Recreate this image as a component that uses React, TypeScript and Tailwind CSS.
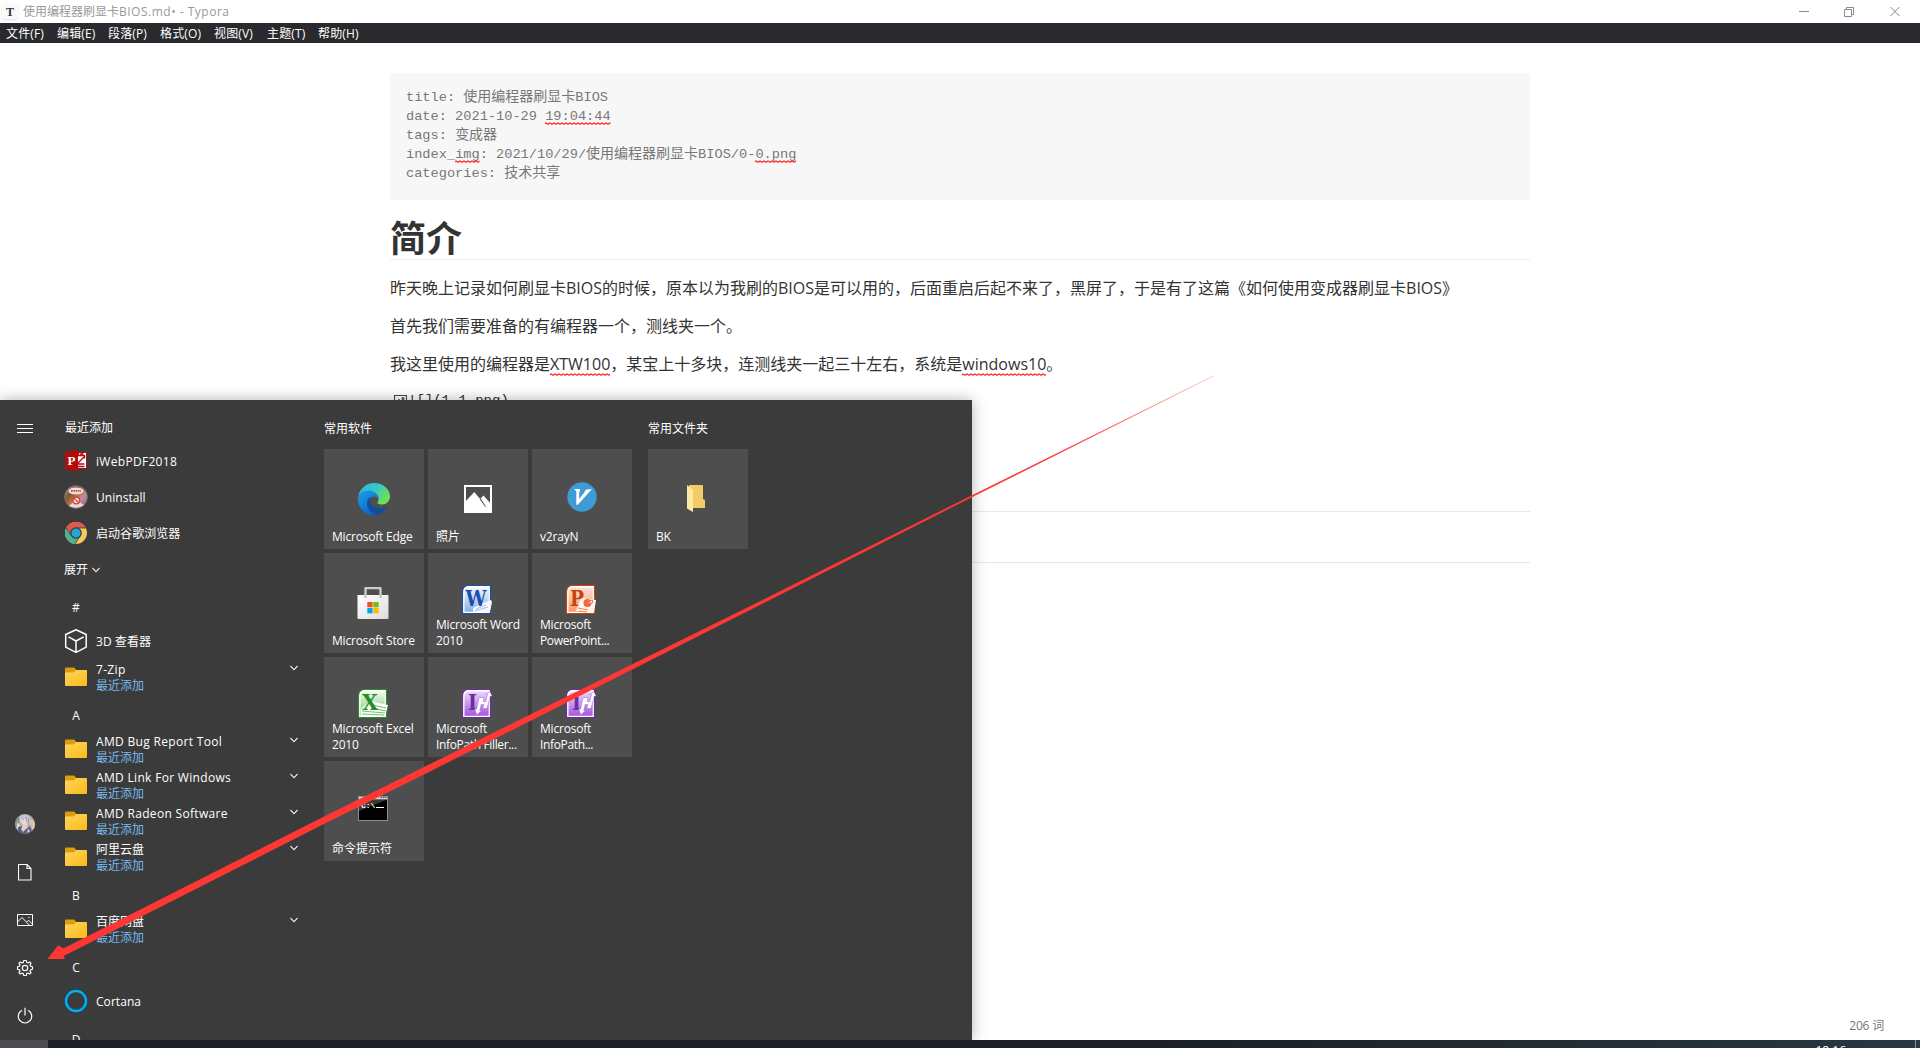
import React from "react";

const UI = "font-['Open_Sans','Noto_Sans_CJK_SC',sans-serif]";

function Squiggle({ children, code = false }: { children: React.ReactNode; code?: boolean }) {
  return (
    <span className="relative inline-block">
      {children}
      <svg className={code ? "absolute left-0 bottom-[1px] h-[3px] w-full" : "absolute left-0 bottom-[1px] h-[3px] w-full"}>
        <defs>
          <pattern id="wave" width="4" height="3" patternUnits="userSpaceOnUse">
            <path d="M0 2.2 L1 0.8 L3 2.4 L4 1.2" fill="none" stroke="#f33" strokeWidth="1.1" />
          </pattern>
        </defs>
        <rect width="100%" height="3" fill="url(#wave)" />
      </svg>
    </span>
  );
}

function Folder() {
  return (
    <svg width="22" height="20" viewBox="0 0 22 20">
      <defs>
        <linearGradient id="fold" x1="0" y1="0" x2="1" y2="1">
          <stop offset="0" stopColor="#ffd75e" />
          <stop offset="1" stopColor="#fbb917" />
        </linearGradient>
      </defs>
      <path d="M0 1.2Q0 .5 .8 .5H9l2.4 2.5V8H0Z" fill="#dd9c0c" />
      <path d="M0 5.5h8.5L11.2 3H21.2q.8 0 .8.8V18.2q0 .8-.8.8H.8q-.8 0-.8-.8Z" fill="url(#fold)" />
    </svg>
  );
}

function PdfIcon() {
  return (
    <svg width="24" height="24" viewBox="0 0 24 24">
      <rect x="11" y="3.5" width="11.5" height="16" fill="#fff" stroke="#b30c0c" />
      <path d="M14.500 3.500v3h2.500v-3M19 4l-1.500 3M14 14l7-7M17.500 6.500h3v3M14 15h6.500M14 17.500h6.500" stroke="#b30c0c" strokeWidth="1.4" fill="none" />
      <path d="M1 2.8 14 .8V22.500L1 20Z" fill="#b30c0c" />
      <text x="3.4" y="15.800" fontSize="13" fontWeight="700" fill="#fff" fontFamily="Liberation Serif">P</text>
    </svg>
  );
}

function UninstallIcon() {
  return (
    <svg width="24" height="24" viewBox="0 0 24 24">
      <defs>
        <linearGradient id="un" x1="0" y1="0" x2="1" y2="1">
          <stop offset="0" stopColor="#c9a0a0" />
          <stop offset=".3" stopColor="#7a5a3c" />
          <stop offset=".45" stopColor="#b5642c" />
          <stop offset=".65" stopColor="#c98aa0" />
          <stop offset="1" stopColor="#8d5a6a" />
        </linearGradient>
      </defs>
      <circle cx="12" cy="12" r="11.3" fill="url(#un)" stroke="#777" />
      <ellipse cx="12" cy="6" rx="7.5" ry="3.6" fill="#f3ddda" />
      <path d="M7 5.8h10" stroke="#b04a4a" strokeWidth="1.8" strokeDasharray="1.6 .7" />
      <path d="M5 21q7-8 15-1-7 5-15 1Z" fill="#e6d6d4" />
      <circle cx="12.3" cy="15.5" r="3.3" fill="#f6e4e2" stroke="#d0403a" strokeWidth="1.2" />
      <path d="m10 13.2 4.7 4.6" stroke="#d0403a" strokeWidth="1.2" />
    </svg>
  );
}

function ChromeIcon() {
  return (
    <svg width="24" height="24" viewBox="0 0 24 24">
      <circle cx="12" cy="12" r="11" fill="#f3c95b" />
      <path d="M12 12 6.5 15 2.3 6.7A11 11 0 0 1 21.8 7H12Z" fill="#e2574c" />
      <path d="M2.3 6.8 7.5 14.5 12 17 15.5 15.5 11 23A11 11 0 0 1 2.3 6.8Z" fill="#4bb395" />
      <path d="M2.3 6.8 7.2 14.6M21.8 7H12M11 23l5.4-8.4" stroke="#3b3b3b" strokeWidth=".8" />
      <circle cx="12" cy="12" r="5.2" fill="#25a6d8" stroke="#373737" strokeWidth="1.2" />
    </svg>
  );
}

function CubeIcon() {
  return (
    <svg width="24" height="24" viewBox="0 0 24 24" fill="none" stroke="#fff" strokeWidth="1.5" strokeLinejoin="round">
      <path d="M12 .8 22.2 5.500V18.2L12 23.3 1.7 18.2V5.500ZM12 23V12M4.5 7.8 12 12l7.7-4.2" />
    </svg>
  );
}

function CortanaIcon() {
  return (
    <svg width="24" height="24" viewBox="0 0 24 24" fill="none">
      <circle cx="12" cy="12" r="10" stroke="#0a5f87" strokeWidth="3.4" />
      <circle cx="12" cy="12" r="10" stroke="#08b3fa" strokeWidth="1.9" />
    </svg>
  );
}

function Chevron() {
  return (
    <svg width="8" height="6" viewBox="0 0 8 6" fill="none" stroke="#e8e8e8" strokeWidth="1.1">
      <path d="M.4 1 4 4.6 7.6 1" />
    </svg>
  );
}

type Row = { kind: "head" | "letter" | "app" | "folder" | "expand"; text: string; icon?: React.ReactNode };

const rows: Row[] = [
  { kind: "head", text: "最近添加" },
  { kind: "app", text: "iWebPDF2018", icon: <PdfIcon /> },
  { kind: "app", text: "Uninstall", icon: <UninstallIcon /> },
  { kind: "app", text: "启动谷歌浏览器", icon: <ChromeIcon /> },
  { kind: "expand", text: "展开" },
  { kind: "letter", text: "#" },
  { kind: "app", text: "3D 查看器", icon: <CubeIcon /> },
  { kind: "folder", text: "7-Zip" },
  { kind: "letter", text: "A" },
  { kind: "folder", text: "AMD Bug Report Tool" },
  { kind: "folder", text: "AMD Link For Windows" },
  { kind: "folder", text: "AMD Radeon Software" },
  { kind: "folder", text: "阿里云盘" },
  { kind: "letter", text: "B" },
  { kind: "folder", text: "百度网盘" },
  { kind: "letter", text: "C" },
  { kind: "app", text: "Cortana", icon: <CortanaIcon /> },
  { kind: "letter", text: "D" },
];

const cjkOnly = (s: string) => /^[\u4e00-\u9fff]+$/.test(s);

function AppRow({ row }: { row: Row }) {
  if (row.kind === "head") return <div className="flex h-9 items-center pt-[6px] pl-[17px]">{row.text}</div>;
  if (row.kind === "expand")
    return (
      <div className="flex h-9 items-center gap-1 pt-[2px] pl-4">
        {row.text}
        <Chevron />
      </div>
    );
  if (row.kind === "letter")
    return (
      <div className="ml-4 flex h-9 w-6 items-center justify-center pt-[5px] font-medium">
        <span>{row.text}</span>
      </div>
    );
  if (row.kind === "app")
    return (
      <div className="flex h-9 items-center pl-4">
        <span className="flex w-8">{row.icon}</span>
        <span className={row.text.startsWith("iWeb") ? "pt-px tracking-[0.3px] whitespace-nowrap" : "pt-px tracking-[0.05px] whitespace-nowrap"}>{row.text}</span>
      </div>
    );
  return (
    <div className="flex h-9 items-center pl-[17px]">
      <span className="w-[31px]">
        <Folder />
      </span>
      <span className="w-[194px] pt-[2px] whitespace-nowrap">
        <span className={cjkOnly(row.text) ? "block h-4" : "block h-4 tracking-[0.32px]"}>{row.text}</span>
        <span className="block h-4 text-[#76b9ed]">最近添加</span>
      </span>
      <span className="-mt-[19px]">
        <Chevron />
      </span>
    </div>
  );
}

function EdgeIcon() {
  return (
    <svg width="32" height="32" viewBox="0 0 32 32">
      <defs>
        <linearGradient id="e1" x1="0" y1="0" x2="1" y2=".5">
          <stop offset="0" stopColor="#2fb4ee" />
          <stop offset=".55" stopColor="#35c9c5" />
          <stop offset="1" stopColor="#6fe056" />
        </linearGradient>
        <linearGradient id="e2" x1="0" y1="0" x2=".6" y2="1">
          <stop offset="0" stopColor="#1ea0e8" />
          <stop offset="1" stopColor="#0a66c4" />
        </linearGradient>
      </defs>
      <path d="M.3 13.500C1.500 6 8 0 16 0c9 0 16 6.300 16 13.500C32 18 28.500 21.500 24 21.500c-3.200 0-5.300-1-4.200-2.500 1.800-3 .2-7.500-5-9.500C8 7.500 2 10 .3 13.500Z" fill="url(#e1)" />
      <path d="M.3 14C2 9 6 7.400 10.500 7.600c6 .4 10.300 4 10.300 8.400-2.500-3.600-8.300-3.600-9.800 2-1.300 5.500 2.500 10.500 7.500 13.800C8 33.500-1.500 25 .3 14Z" fill="url(#e2)" />
      <path d="M12.500 13.700c-3.700 2-4.700 8-1.700 12.500 2 3.200 4.700 5 8.200 5.500 4.500-.9 8.500-4.200 10-8-6.500 3.300-14.500 1.500-16.800-4.500-.6-2-.5-4 .3-5.500Z" fill="#114f9c" />
    </svg>
  );
}

function PhotosIcon() {
  return (
    <svg width="28" height="28" viewBox="0 0 28 28">
      <path d="M1 1H27V27H1Z" fill="none" stroke="#fff" strokeWidth="2" />
      <path d="M1 17 10.300 7 18.200 16.500 16.500 13.500 19.500 10.500 27 19V27H1Z" fill="#fff" />
      <path d="M16.800 13.600 22.800 23l-2.600-2.600-4.200-6Z" fill="#4d4d4d" />
    </svg>
  );
}

function V2Icon() {
  return (
    <svg width="30" height="30" viewBox="0 0 30 30">
      <circle cx="15" cy="15" r="14.700" fill="#3f9bd6" />
      <path d="M7 7H13V15.500L19.300 7.500 25 7 10.800 22.800 9.300 22.800 9.300 9Z" fill="#fff" />
      <path d="M12.200 9.500V17L17.500 10Z" fill="#3f9bd6" />
    </svg>
  );
}

function StoreIcon() {
  return (
    <svg width="32" height="32" viewBox="0 0 32 32">
      <defs>
        <linearGradient id="st" x1="0" y1="0" x2="1" y2="1">
          <stop offset="0" stopColor="#fff" />
          <stop offset="1" stopColor="#dcdcdc" />
        </linearGradient>
      </defs>
      <path d="M8.500 12V1.500Q8.500 1 9 1H23q.5 0 .5.500V12" fill="none" stroke="#ccc" strokeWidth="2.400" />
      <path d="M.5 8H31.500V31q0 1-1 1H1.500q-1 0-1-1Z" fill="url(#st)" />
      <path d="M8.500 8v3M23.500 8v3" stroke="#bbb" strokeWidth="2" />
      <rect x="10.300" y="15" width="5.300" height="5.300" fill="#f25022" />
      <rect x="16.300" y="15" width="5.300" height="5.300" fill="#7fba00" />
      <rect x="10.300" y="21" width="5.300" height="5.300" fill="#00a4ef" />
      <rect x="16.300" y="21" width="5.300" height="5.300" fill="#ffb900" />
    </svg>
  );
}

type OfficeProps = {
  id: string;
  letter: string;
  x: number;
  width: number;
  dark: string;
  mid: string;
  light: string;
  children: React.ReactNode;
};

function OfficeIcon({ id, letter, x, width, dark, mid, light, children }: OfficeProps) {
  return (
    <svg width="32" height="32" viewBox="0 0 32 32">
      <defs>
        <linearGradient id={id} x1="0" y1="0" x2="0" y2="1">
          <stop offset="0" stopColor={light} />
          <stop offset="1" stopColor={mid} />
        </linearGradient>
      </defs>
      <path d="M8 1.500H29.500V29.500H1.500V8Q1.500 1.500 8 1.500Z" fill="#fff" stroke={dark} strokeWidth="1.200" />
      <path d="M8.500 3.500H27.700V27.700H3.500V8.500Q3.500 3.500 8.500 3.500Z" fill={`url(#${id})`} />
      {letter !== "I" && children}
      <text x={x} y="22" textLength={width} lengthAdjust="spacingAndGlyphs" fontSize="22" fontWeight="700" fill={dark} fontFamily="DejaVu Serif">
        {letter}
      </text>
      {letter === "I" && children}
    </svg>
  );
}

const WordIcon = () => (
  <OfficeIcon id="w" letter="W" x={4.5} width={21} dark="#1a4fae" mid="#8cb0e6" light="#f2f7ff">
    <path d="M12 24 22 19 30 16 31 18 29 28 12 28Z" fill="#f6f9ff" />
    <path d="M15 25l10-4M14 27l13-4" stroke="#a8bfe8" />
  </OfficeIcon>
);
const PptIcon = () => (
  <OfficeIcon id="p" letter="P" x={5} width={14} dark="#c9430e" mid="#f29a70" light="#fde3d3">
    <path d="M16 14 31 16 29 29 11 27Z" fill="#fff5ef" />
    <circle cx="22.500" cy="19" r="4" fill="#ee6a3a" />
    <path d="M22.500 19h5v-3ZM13 24l10 2M14 27l8 1" stroke="#ee8058" fill="#fff" />
  </OfficeIcon>
);
const ExcelIcon = () => (
  <OfficeIcon id="x" letter="X" x={5} width={16} dark="#2a8a2e" mid="#7cc67c" light="#f0fbe9">
    <path d="M13 13 31 17 28 29 4 28V21Z" fill="#fbfffa" />
    <path d="M5 23l23 2M5 26l22 1M15 17l14 3M14 20l15 3" stroke="#79bd72" strokeWidth="1.200" />
  </OfficeIcon>
);
const InfoIcon = () => (
  <OfficeIcon id="i" letter="I" x={7} width={9} dark="#68309f" mid="#a557dc" light="#ecd7fa">
    <path d="M18 9.500h5l-.8 4h2.600l1.700-7h-2l4.300-3 2.500 4.800-2-.3-3.300 12.500h-4.200l1-4h-2.600l-1.500 6 2 .2-5 4-2-5.700h2Z" fill="#fff" stroke="#8f45c4" strokeWidth=".4" />
  </OfficeIcon>
);

function CmdIcon() {
  return (
    <svg width="30" height="25" viewBox="0 0 30 25">
      <rect x=".5" y=".5" width="29" height="24" fill="#000" stroke="#8c8f92" />
      <rect x="1" y="1" width="28" height="2.500" fill="#cfd3d6" />
      <path d="M22.500 1.500h1.500M25 1.500h1.500M27.300 1.500h1" stroke="#444" />
      <path d="M1 4h27L1 15Z" fill="#3a3a3a" />
      <text x="3" y="11.500" fontSize="8" fontWeight="700" fill="#fff" fontFamily="Liberation Mono">C:\</text>
      <path d="M18 11.500h8" stroke="#fff" />
    </svg>
  );
}

function BkIcon() {
  return (
    <svg width="18" height="27" viewBox="0 0 18 27">
      <path d="M2 0H16V14l2 1V23H2Z" fill="#f0cc69" />
      <path d="M0 0 6 5V27L0 23.500Z" fill="#ffe9a2" />
    </svg>
  );
}

type TileData = { label: string[]; icon: React.ReactNode; shift?: string };
const tiles: TileData[] = [
  { label: ["Microsoft Edge"], icon: <EdgeIcon /> },
  { label: ["照片"], icon: <PhotosIcon /> },
  { label: ["v2rayN"], icon: <V2Icon />, shift: "pb-[5px] pr-px" },
  { label: ["Microsoft Store"], icon: <StoreIcon />, shift: "pr-[2px]" },
  { label: ["Microsoft Word", "2010"], icon: <WordIcon />, shift: "pb-[6px] pr-[2px]" },
  { label: ["Microsoft", "PowerPoint..."], icon: <PptIcon />, shift: "pb-[6px] pr-[2px]" },
  { label: ["Microsoft Excel", "2010"], icon: <ExcelIcon />, shift: "pb-[6px] pr-[2px]" },
  { label: ["Microsoft", "InfoPath Filler..."], icon: <InfoIcon />, shift: "pb-[6px] pr-[2px]" },
  { label: ["Microsoft", "InfoPath..."], icon: <InfoIcon />, shift: "pb-[6px] pr-[2px]" },
  { label: ["命令提示符"], icon: <CmdIcon />, shift: "pb-[5px] pr-[2px]" },
];

function Tile({ tile }: { tile: TileData }) {
  return (
    <div className="relative h-[100px] w-[100px] bg-[#4e4e4e]">
      <div className={`flex h-full items-center justify-center ${tile.shift ?? ""}`}>{tile.icon}</div>
      <div className="absolute bottom-[4px] left-2 leading-4 whitespace-nowrap">
        {tile.label.map((l) => (
          <div key={l} className={cjkOnly(l) ? "" : l.endsWith("...") ? "tracking-[-0.35px]" : "tracking-[-0.2px]"}>
            {l}
          </div>
        ))}
      </div>
    </div>
  );
}

function RailIcons() {
  return (
    <div className="flex w-12 shrink-0 flex-col items-center justify-between pl-[2px] text-white">
      <div className="flex h-14 items-center">
        <svg width="16" height="11" viewBox="0 0 16 11" stroke="#fff">
          <path d="M0 1.500h16M0 5.500h16M0 9.500h16" />
        </svg>
      </div>
      <div className="flex flex-col">
        <div className="flex h-12 w-6 items-center justify-center">
          <svg width="20" height="20" viewBox="0 0 20 20">
            <clipPath id="av"><circle cx="10" cy="10" r="10" /></clipPath>
            <g clipPath="url(#av)">
              <rect width="20" height="20" fill="#b9a9a0" />
              <path d="M0 0h7L3 12H0Z" fill="#8a958a" />
              <path d="M4 3q5-5 11 0l1 7-4 2-7-3Z" fill="#c3c4d8" />
              <path d="M6 5l3-1 3 2 1 5-4 2-2-3Z" fill="#ecd3cb" />
              <path d="M7 4l2 2M11 3l1 5M14 4l-1 7" stroke="#8f93b0" strokeWidth=".9" />
              <path d="M3 12l4 1 4 2 4-3 3 8H3Z" fill="#4f6480" />
              <path d="M9 10l4 3-5 5-2-3Z" fill="#e5ccc5" />
              <path d="M15 5l5 3v8l-3-1Z" fill="#dcc9a8" />
              <path d="M2 8l3 3-3 4ZM13 15l2 2-3 2Z" fill="#d9e0e6" />
              <path d="M6 12l1 1M14 13l1 1" stroke="#c75b57" />
            </g>
          </svg>
        </div>
        <div className="flex h-12 w-6 items-center justify-center">
          <svg width="14" height="17" viewBox="0 0 14 17" fill="none" stroke="#fff" className="-ml-px">
            <path d="M.5.500H9L13 4.500V16H.5ZM9 .5V4.500H13" strokeWidth="1.100" />
          </svg>
        </div>
        <div className="flex h-12 w-6 items-center justify-center">
          <svg width="16" height="12" viewBox="0 0 16 12" fill="none" stroke="#fff">
            <path d="M.5.500H15.500V11.500H.5ZM.5 8 5 3.500 12.500 11.300M9.500 8.200 11.500 6.200 15.500 10.200" />
            <circle cx="12" cy="3.500" r=".7" fill="#fff" stroke="none" />
          </svg>
        </div>
        <div className="flex h-12 w-6 items-center justify-center">
          <svg width="18" height="18" viewBox="-9 -9 18 18" fill="none" stroke="#fff" strokeWidth="1.150" strokeLinejoin="round">
            <path d="M-1.300-7.500H1.300L1.700-5.600 3.100-5 4.700-6.100 6.100-4.700 5-3.100 5.600-1.700 7.500-1.300V1.300L5.600 1.700 5 3.100 6.100 4.700 4.700 6.100 3.100 5 1.700 5.600 1.300 7.500H-1.300L-1.700 5.600-3.100 5-4.700 6.100-6.100 4.700-5 3.100-5.600 1.700-7.500 1.300V-1.300L-5.600-1.700-5-3.100-6.100-4.700-4.700-6.100-3.100-5-1.700-5.600Z" />
            <circle r="2.700" />
          </svg>
        </div>
        <div className="flex h-12 w-6 items-center justify-center">
          <svg width="16" height="18" viewBox="0 0 16 18" fill="none" stroke="#fff" strokeWidth="1.200">
            <path d="M5 3.300A6.700 6.700 0 1 0 11 3.300M8 .8V8.500" />
          </svg>
        </div>
      </div>
    </div>
  );
}

function StartMenu() {
  return (
    <div className={`absolute top-[400px] left-0 flex h-[640px] w-[972px] overflow-hidden bg-[#3b3b3b] text-xs text-white ${UI}`}>
      <RailIcons />
      <div className="w-[276px] shrink-0 pt-[7px] leading-4">
        {rows.map((r, i) => (
          <AppRow key={i} row={r} />
        ))}
      </div>
      <div className="w-[324px] shrink-0">
        <div className="flex h-[49px] items-center pt-[9px]">常用软件</div>
        <div className="grid w-[308px] grid-cols-3 gap-1">
          {tiles.map((t, i) => (
            <Tile key={i} tile={t} />
          ))}
        </div>
      </div>
      <div>
        <div className="flex h-[49px] items-center pt-[9px]">常用文件夹</div>
        <Tile tile={{ label: ["BK"], icon: <BkIcon />, shift: "pb-px pr-1" }} />
      </div>
    </div>
  );
}

const menus = [
  ["文件(F)", "w-[51px]"],
  ["编辑(E)", "w-[51px]"],
  ["段落(P)", "w-[52px]"],
  ["格式(O)", "w-[54px]"],
  ["视图(V)", "w-[53px]"],
  ["主题(T)", "w-[51px]"],
  ["帮助(H)", "w-[51px]"],
];

function Cj({ children }: { children: React.ReactNode }) {
  return <span className="text-[14px]">{children}</span>;
}

function ImageGlyph() {
  return (
    <svg className="mr-px inline-block align-[-2px]" width="13" height="12" viewBox="0 0 13 12" fill="none" stroke="#444" strokeWidth="1.100">
      <path d="M.5.500H12.500V11.500H.5ZM1 9 5 4.500 9 9 10.500 7.500 12 9" />
      <circle cx="9" cy="3.500" r="1" />
    </svg>
  );
}

export default function App() {
  return (
    <div className={`relative flex h-[1048px] w-[1920px] flex-col overflow-hidden bg-white text-[#333] ${UI}`}>
      <header className="flex h-[23px] shrink-0 items-center text-xs text-[#999]">
        <span className="ml-[2px] flex h-[15px] w-[16px] items-center justify-center rounded-sm bg-[#fafafa] font-['Liberation_Serif',serif] text-[12px] font-bold text-[#333] shadow-sm">T</span>
        <span className="ml-[5px]">
          使用编程器刷显卡<span className="tracking-[0.5px]">BIOS.md• - Typora</span>
        </span>
        <svg className="mr-[19px] ml-auto" width="102" height="12" viewBox="0 0 102 12" fill="none" stroke="#8a8a8a">
          <path d="M0 5.500h10M45.500 3.500h7v7h-7ZM47.500 3.500v-2h7v7h-2M91.500 1l9 9M100.500 1l-9 9" />
        </svg>
      </header>
      <nav className="flex h-5 shrink-0 items-center bg-[#292a2d] pt-[2px] pl-[6px] text-xs text-white">
        {menus.map(([m, w]) => (
          <span key={m} className={`shrink-0 tracking-[0.15px] whitespace-nowrap ${w}`}>{m}</span>
        ))}
      </nav>
      <main className="mx-[390px] flex flex-1 flex-col pt-[30px]">
        <pre className="h-[127px] rounded-[3px] bg-[#f7f7f7] pt-[15px] pl-4 font-['Liberation_Mono','Noto_Sans_CJK_SC',monospace] text-[13.65px] text-[#777]">
          <div className="h-[19px] leading-[19px]">title: <Cj>使用编程器刷显卡</Cj>BIOS</div>
          <div className="h-[19px] leading-[19px]">date: 2021-10-29 <Squiggle code>19:04:44</Squiggle></div>
          <div className="h-[19px] leading-[19px]">tags: <Cj>变成器</Cj></div>
          <div className="h-[19px] leading-[19px]">index_<Squiggle code>img</Squiggle>: 2021/10/29/<Cj>使用编程器刷显卡</Cj>BIOS/0-<Squiggle code>0.png</Squiggle></div>
          <div className="h-[19px] leading-[19px]">categories: <Cj>技术共享</Cj></div>
        </pre>
        <h1 className="mt-4 h-[44px] border-b border-[#eee] text-[36px] leading-[45px] font-bold">简介</h1>
        <p className="mt-[15px] h-[26px] text-base leading-[26px] whitespace-nowrap">昨天晚上记录如何刷显卡BIOS的时候，原本以为我刷的BIOS是可以用的，后面重启后起不来了，黑屏了，于是有了这篇《如何使用变成器刷显卡BIOS》</p>
        <p className="mt-3 h-[26px] text-base leading-[26px]">首先我们需要准备的有编程器一个，测线夹一个。</p>
        <p className="mt-3 h-[26px] text-base leading-[26px]">我这里使用的编程器是<Squiggle>XTW100</Squiggle>，某宝上十多块，连测线夹一起三十左右，系统是<Squiggle>windows10</Squiggle>。</p>
        <p className="mt-[11px] h-[26px] pl-1 font-['Liberation_Mono','Noto_Sans_CJK_SC',monospace] text-[14px] leading-[26px]">
          <ImageGlyph />
          ![](1-1.png)
        </p>
        <hr className="mt-[97px] border-[#e7e7e7]" />
        <hr className="mt-[50px] border-[#e7e7e7]" />
      </main>
      <div className="absolute right-9 bottom-[14px] text-xs tracking-[-0.2px] text-[#777]">206 词</div>
      <footer className="flex h-2 shrink-0 justify-between overflow-hidden bg-gradient-to-r from-[#1c2024] from-60% to-[#263842]">
        <span className="h-2 w-12 bg-[#4a4b4e]" />
        <span className="mr-[4px] flex border-r border-[#87929a] pt-[5px] pr-[69px] text-xs leading-3 text-white">18:16</span>
      </footer>
      <div className="absolute top-[400px] left-0 h-[640px] w-[972px] shadow-[0_0_14px_rgba(0,0,0,0.3)] [clip-path:inset(-30px_-30px_0_0)]" />
      <StartMenu />
      <svg className="absolute top-0 left-0" width="1920" height="1048">
        <defs>
          <linearGradient id="arrow" gradientUnits="userSpaceOnUse" x1="1214" y1="375" x2="1050" y2="458">
            <stop offset="0" stopColor="#fc3734" stopOpacity=".35" />
            <stop offset="1" stopColor="#fc3734" />
          </linearGradient>
        </defs>
        <path d="M1214 375.200 972 495.200 760 601.300 424 767 320 818.500 63.300 948.500 58.300 945.300 47.300 958.900 65 958.900 63.700 956 320 826 424 774.500 760 605 972 497.200 1214 376.100Z" fill="url(#arrow)" />
      </svg>
    </div>
  );
}
